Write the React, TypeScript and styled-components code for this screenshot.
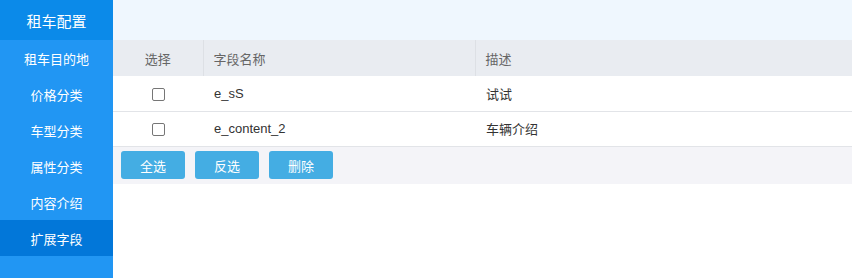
import styled, { createGlobalStyle } from "styled-components";

const GlobalStyle = createGlobalStyle`
  html, body {
    margin: 0;
    padding: 0;
    background: #fff;
    font-family: "Microsoft YaHei", "Liberation Sans", "Noto Sans CJK SC", sans-serif;
  }
  * {
    box-sizing: border-box;
  }
`;

const Layout = styled.div`
  display: flex;
  height: 278px;
`;

const Sidebar = styled.aside`
  width: 113px;
  flex-shrink: 0;
  background: #2196f3;
  display: flex;
  flex-direction: column;
`;

const Brand = styled.div`
  height: 40px;
  display: flex;
  align-items: center;
  justify-content: center;
  background: #0b8ae9;
  color: #fff;
  font-size: 15px;
`;

const MenuItem = styled.div<{ $active?: boolean }>`
  height: 36px;
  display: flex;
  align-items: center;
  justify-content: center;
  color: #fff;
  font-size: 13px;
  background: ${(p) => (p.$active ? "#0277d9" : "transparent")};
`;

const Main = styled.main`
  flex: 1;
  display: flex;
  flex-direction: column;
`;

const TopBar = styled.div`
  height: 40px;
  background: #eff7fe;
`;

const Table = styled.table`
  width: 100%;
  border-collapse: collapse;
  table-layout: fixed;
  font-size: 13px;
  color: #333;
`;

const HeadCell = styled.th<{ $w?: number; $center?: boolean }>`
  height: 36px;
  padding: 0 0 0 ${(p) => (p.$center ? 0 : 10)}px;
  width: ${(p) => (p.$w ? `${p.$w}px` : "auto")};
  background: #e9ecf1;
  color: #666;
  font-weight: normal;
  text-align: ${(p) => (p.$center ? "center" : "left")};
  & + & {
    border-left: 1px solid #dde0e5;
  }
`;

const Cell = styled.td<{ $center?: boolean }>`
  height: 35px;
  padding: 0 0 0 ${(p) => (p.$center ? 0 : 11)}px;
  text-align: ${(p) => (p.$center ? "center" : "left")};
  border-bottom: 1px solid #e2e4e8;
`;

const Check = styled.span`
  display: inline-block;
  width: 13px;
  height: 13px;
  border: 1px solid #767676;
  border-radius: 2px;
  background: #fff;
  vertical-align: middle;
`;

const Actions = styled.div`
  height: 37px;
  background: #f4f4f8;
  display: flex;
  align-items: center;
  gap: 10px;
  padding-left: 8px;
`;

const Button = styled.button`
  width: 64px;
  height: 28px;
  border: none;
  border-radius: 3px;
  background: #44ade3;
  color: #fff;
  font-family: inherit;
  font-size: 13px;
  padding: 0;
`;

const MENU = ["租车目的地", "价格分类", "车型分类", "属性分类", "内容介绍", "扩展字段"];

const ROWS = [
  { name: "e_sS", desc: "试试" },
  { name: "e_content_2", desc: "车辆介绍" },
];

export default function App() {
  return (
    <>
      <GlobalStyle />
      <Layout>
        <Sidebar>
          <Brand>租车配置</Brand>
          {MENU.map((m) => (
            <MenuItem key={m} $active={m === "扩展字段"}>
              {m}
            </MenuItem>
          ))}
        </Sidebar>
        <Main>
          <TopBar />
          <Table>
            <thead>
              <tr>
                <HeadCell $w={90} $center>
                  选择
                </HeadCell>
                <HeadCell $w={272}>字段名称</HeadCell>
                <HeadCell>描述</HeadCell>
              </tr>
            </thead>
            <tbody>
              {ROWS.map((r) => (
                <tr key={r.name}>
                  <Cell $center>
                    <Check />
                  </Cell>
                  <Cell>{r.name}</Cell>
                  <Cell>{r.desc}</Cell>
                </tr>
              ))}
            </tbody>
          </Table>
          <Actions>
            <Button>全选</Button>
            <Button>反选</Button>
            <Button>删除</Button>
          </Actions>
        </Main>
      </Layout>
    </>
  );
}
